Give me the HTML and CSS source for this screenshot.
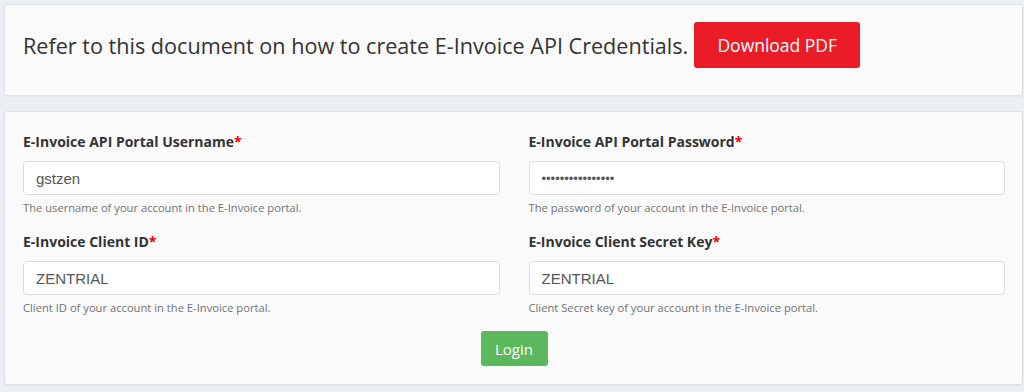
FILE: index.html
```html
<!doctype html>
<html>
	<head>
		<meta charset="utf-8" />
		<title>E-Invoice API Credentials</title>
		<link rel="stylesheet" href="styles.css">
	</head>
	<body>
		<div class="card intro">
			<span class="intro-text">Refer to this document on how to create E-Invoice API Credentials.</span>
			<button class="btn btn-red">Download PDF</button>
		</div>
		<div class="card login">
			<div class="fields">
				<div class="field">
					<label>E-Invoice API Portal Username<span class="req">*</span></label>
					<input type="text" value="gstzen" />
					<p class="help">The username of your account in the E-Invoice portal.</p>
				</div>
				<div class="field">
					<label>E-Invoice API Portal Password<span class="req">*</span></label>
					<input type="password" value="gstzenpassword12" />
					<p class="help">The password of your account in the E-Invoice portal.</p>
				</div>
				<div class="field">
					<label>E-Invoice Client ID<span class="req">*</span></label>
					<input type="text" value="ZENTRIAL" />
					<p class="help">Client ID of your account in the E-Invoice portal.</p>
				</div>
				<div class="field">
					<label>E-Invoice Client Secret Key<span class="req">*</span></label>
					<input type="text" value="ZENTRIAL" />
					<p class="help">Client Secret key of your account in the E-Invoice portal.</p>
				</div>
			</div>
			<div class="actions">
				<button class="btn btn-green">Login</button>
			</div>
		</div>
	</body>
</html>
```

FILE: styles.css
```css
*{
	margin:0;
	padding:0;
	box-sizing:border-box;
}
html,body{
	background-color:#ebeef3;
}
body{
	padding:4px 1px 4px 4px;
	font-family:'Open Sans','Noto Sans',sans-serif;
	color:#333;
}
.card{
	background-color:#fafafa;
	border:1px solid #dcdfe3;
	border-radius:3px;
	box-shadow:0 1px 1px rgba(0,0,0,.04);
}
.intro{
	height:92px;
	display:flex;
	align-items:center;
	padding:0 18px 10px;
}
.intro-text{
	font-size:21.6px;
	color:#333;
}
.btn{
	border:none;
	border-radius:3px;
	color:#fff;
	font-family:'Open Sans','Noto Sans',sans-serif;
	cursor:pointer;
}
.btn-red{
	background-color:#e91c27;
	width:166px;
	height:46px;
	font-size:17.5px;
	margin-left:6px;
}
.login{
	margin-top:15px;
	height:274px;
	padding:20px 17px 0 18px;
}
.fields{
	display:grid;
	grid-template-columns:1fr 1fr;
	column-gap:29px;
	row-gap:16px;
}
.field label{
	display:block;
	font-size:14px;
	font-weight:bold;
	line-height:20px;
	margin-bottom:9px;
	color:#333;
}
.req{
	color:#e00;
}
.field input{
	display:block;
	width:100%;
	height:34px;
	padding:0 12px;
	border:1px solid #dcdcdc;
	border-radius:4px;
	background-color:#fff;
	font-family:'Liberation Sans',Arial,sans-serif;
	font-size:15px;
	color:#555;
	outline:none;
}
.field input[type=password]{
	font-size:13px;
}
.help{
	margin-top:5px;
	font-size:11.2px;
	line-height:16px;
	color:#737373;
}
.actions{
	margin-top:15px;
	text-align:center;
}
.btn-green{
	background-color:#5cb85c;
	width:67px;
	height:35px;
	font-size:15px;
}
```
